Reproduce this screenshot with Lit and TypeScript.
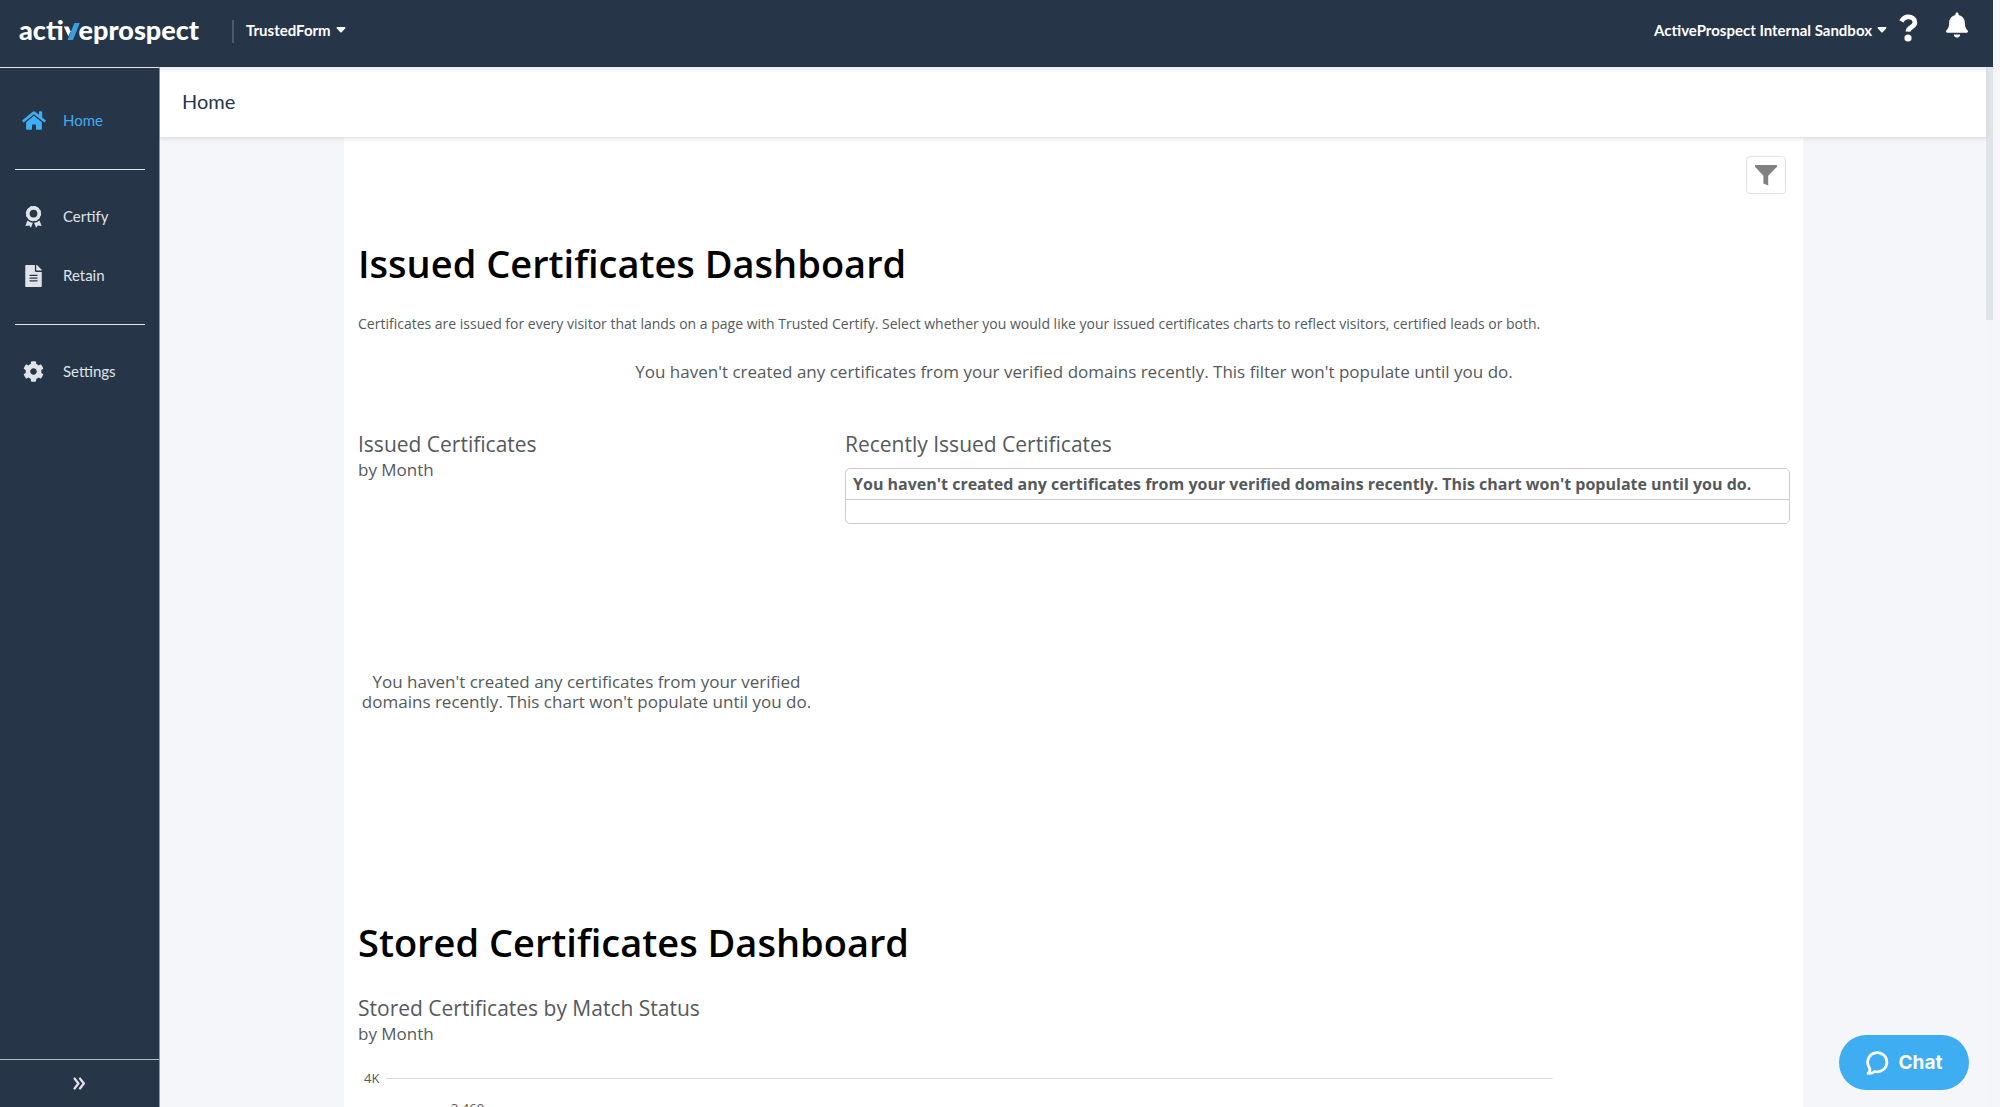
import { LitElement, html, css, svg } from "lit";
import { customElement, property } from "lit/decorators.js";

const ICONS: Record<string, { box: string; body: unknown }> = {
  home: {
    box: "0 0 576 512",
    body: svg`<path d="M280.37 148.26L96 300.11V464a16 16 0 0 0 16 16l112.06-.29a16 16 0 0 0 15.92-16V368a16 16 0 0 1 16-16h64a16 16 0 0 1 16 16v95.64a16 16 0 0 0 16 16.05L464 480a16 16 0 0 0 16-16V300L295.67 148.26a12.19 12.19 0 0 0-15.3 0zM571.6 251.47L488 182.56V44.05a12 12 0 0 0-12-12h-56a12 12 0 0 0-12 12v72.61L318.47 43a48 48 0 0 0-61 0L4.34 251.47a12 12 0 0 0-1.6 16.9l25.5 31A12 12 0 0 0 45.15 301l235.22-193.74a12.19 12.19 0 0 1 15.3 0L530.9 301a12 12 0 0 0 16.9-1.6l25.5-31a12 12 0 0 0-1.7-16.93z"/>`,
  },
  certify: {
    box: "0 0 17 22",
    body: svg`<circle cx="8.5" cy="7.6" r="5.7" fill="none" stroke="currentColor" stroke-width="3.6"/><circle cx="8.5" cy="7.6" r="7.2" fill="none" stroke="currentColor" stroke-width="1" stroke-dasharray="2.2 1.57"/><path d="M2.4 14.6C4 15.9 5.8 16.6 7.9 16.7L5.9 21.7L4.2 19.6L.4 20.1ZM14.6 14.6C13 15.9 11.2 16.6 9.1 16.7L11.1 21.7L12.8 19.6L16.6 20.1Z"/>`,
  },
  file: {
    box: "0 0 384 512",
    body: svg`<path d="M224 136V0H24C10.7 0 0 10.7 0 24v464c0 13.3 10.7 24 24 24h336c13.3 0 24-10.7 24-24V160H248c-13.2 0-24-10.8-24-24zm64 236c0 6.6-5.4 12-12 12H108c-6.6 0-12-5.4-12-12v-8c0-6.6 5.4-12 12-12h168c6.6 0 12 5.4 12 12v8zm0-64c0 6.6-5.4 12-12 12H108c-6.6 0-12-5.4-12-12v-8c0-6.6 5.4-12 12-12h168c6.6 0 12 5.4 12 12v8zm0-72v8c0 6.6-5.4 12-12 12H108c-6.6 0-12-5.4-12-12v-8c0-6.6 5.4-12 12-12h168c6.6 0 12 5.4 12 12zm96-114.1v6.1H256V0h6.1c6.4 0 12.5 2.5 17 7l97.9 98c4.5 4.5 7 10.6 7 16.9z"/>`,
  },
  cog: {
    box: "0 0 512 512",
    body: svg`<path d="M487.4 315.7l-42.6-24.6c4.3-23.2 4.3-47 0-70.2l42.6-24.6c4.9-2.8 7.1-8.6 5.5-14-11.1-35.6-30-67.8-54.7-94.6-3.8-4.1-10-5.1-14.8-2.3L380.8 110c-17.9-15.4-38.5-27.3-60.8-35.1V25.8c0-5.6-3.9-10.5-9.4-11.7-36.7-8.2-74.3-7.8-109.2 0-5.5 1.2-9.4 6.1-9.4 11.7V75c-22.2 7.9-42.8 19.8-60.8 35.1L88.7 85.5c-4.9-2.8-11-1.9-14.8 2.3-24.7 26.7-43.6 58.9-54.7 94.6-1.7 5.4.6 11.2 5.5 14L67.3 221c-4.3 23.2-4.3 47 0 70.2l-42.6 24.6c-4.9 2.8-7.1 8.6-5.5 14 11.1 35.6 30 67.8 54.7 94.6 3.8 4.1 10 5.1 14.8 2.3l42.6-24.6c17.9 15.4 38.5 27.3 60.8 35.1v49.2c0 5.6 3.9 10.5 9.4 11.7 36.7 8.2 74.3 7.8 109.2 0 5.5-1.2 9.4-6.1 9.4-11.7v-49.2c22.2-7.9 42.8-19.8 60.8-35.1l42.6 24.6c4.9 2.8 11 1.9 14.8-2.3 24.7-26.7 43.6-58.9 54.7-94.6 1.5-5.5-.7-11.3-5.6-14.1zM256 336c-44.1 0-80-35.9-80-80s35.9-80 80-80 80 35.9 80 80-35.9 80-80 80z"/>`,
  },
  bell: {
    box: "0 0 448 512",
    body: svg`<path d="M224 512c35.32 0 63.97-28.65 63.97-64H160.03c0 35.35 28.65 64 63.97 64zm215.39-149.71c-19.32-20.76-55.47-51.99-55.47-154.29 0-77.7-54.48-139.9-127.94-155.16V32c0-17.67-14.32-32-31.98-32s-31.98 14.33-31.98 32v20.84C118.56 68.1 64.08 130.3 64.08 208c0 102.3-36.15 133.53-55.47 154.29-6 6.45-8.66 14.16-8.61 21.71.11 16.4 12.98 32 32.1 32h383.8c19.12 0 32-15.6 32.1-32 .05-7.55-2.61-15.27-8.61-21.71z"/>`,
  },
  help: {
    box: "0 0 19 28",
    body: svg`<path d="M2.4 7.4C4 4.4 6.300 2.900 9.300 2.900C12.900 2.900 15.900 5 15.900 8.400C15.900 13.200 9.300 12.700 9 17.600" fill="none" stroke="currentColor" stroke-width="4.800"/><circle cx="9" cy="24" r="3.600"/>`,
  },
  caret: { box: "0 0 10 6", body: svg`<path d="M1.200 0H8.800Q10 .2 9.200 1.200L5.700 5.200Q5 5.800 4.300 5.200L.8 1.200Q0 .2 1.200 0Z"/>` },
  funnel: { box: "0 0 22 21", body: svg`<path d="M0 0H22V1.800L13.200 10.800V20.600L8.400 18.400V10.800L0 1.800Z"/>` },
  chevrons: {
    box: "0 0 12 12",
    body: svg`<path d="M1.500 1.500L5 6L1.500 10.500M6.500 1.500L10 6L6.500 10.500" fill="none" stroke="currentColor" stroke-width="2.200" stroke-linecap="round" stroke-linejoin="round"/>`,
  },
  chat: {
    box: "0 0 24 24",
    body: svg`<path d="M2 22.300C4.200 20.500 4.400 18.600 3.300 16.600A9.600 9.600 0 1 1 8.800 20.500C6.800 22.200 4.500 22.700 2 22.300Z" fill="none" stroke="currentColor" stroke-width="2.800" stroke-linejoin="round"/>`,
  },
};

@customElement("ui-icon")
class UiIcon extends LitElement {
  @property() name = "home";

  static styles = css`
    :host { display: inline-flex; flex: none; }
    svg { width: 100%; height: 100%; fill: currentColor; }
  `;

  render() {
    const icon = ICONS[this.name];
    return html`<svg viewBox=${icon.box} aria-hidden="true">${icon.body}</svg>`;
  }
}

@customElement("top-bar")
class TopBar extends LitElement {
  static styles = css`
    :host {
      display: flex; align-items: flex-start; justify-content: space-between;
      height: 67px; box-sizing: border-box; margin-right: 7px; padding: 0 25px 0 19px;
      background: #273548; color: #fff; font-family: Lato, "Liberation Sans", sans-serif;
    }
    .side { display: flex; align-items: center; height: 60px; }
    .logo { display: flex; align-items: baseline; color: #fff; text-decoration: none; font-size: 27px; font-weight: 900; line-height: 32px; }
    .vee { flex: none; width: 18px; height: 17px; margin: 0 -2px 0 -1px; }
    .rule { width: 2px; height: 23px; margin: 2px 12px 0 33px; background: #4c5a6b; }
    button { display: flex; align-items: center; gap: 5px; border: 0; padding: 0; background: none; color: inherit; font: inherit; cursor: pointer; }
    .menu { font-size: 15px; font-weight: 700; line-height: 24px; }
    .caret { width: 10px; height: 6px; }
    .round { align-self: flex-start; }
    .help { width: 19px; height: 28px; margin: 14px 28px 0 12px; }
    .bell { width: 22px; height: 26px; margin-top: 12px; }
  `;

  render() {
    return html`
      <div class="side">
        <a class="logo" href="#" aria-label="activeprospect">
          <span>acti</span>
          <svg class="vee" viewBox="0 0 18 17" aria-hidden="true">
            <path d="M.8 3.500H5.400L7.600 8.200L5.400 13.200Z" fill="#fff" />
            <path d="M11.400 0H16.800L10 17H4.600Z" fill="#3a9fe0" />
          </svg>
          <span>eprospect</span>
        </a>
        <span class="rule"></span>
        <button class="menu">TrustedForm <ui-icon class="caret" name="caret"></ui-icon></button>
      </div>
      <div class="side">
        <button class="menu">ActiveProspect Internal Sandbox <ui-icon class="caret" name="caret"></ui-icon></button>
        <button class="round" aria-label="Help"><ui-icon class="help" name="help"></ui-icon></button>
        <button class="round" aria-label="Notifications"><ui-icon class="bell" name="bell"></ui-icon></button>
      </div>
    `;
  }
}

@customElement("side-nav")
class SideNav extends LitElement {
  static styles = css`
    :host {
      display: flex; flex-direction: column; justify-content: space-between; box-sizing: border-box;
      border-top: 1px solid #dfe4e8; border-right: 1px solid #8d959f;
      background: #273548; color: #dfe4e8; font-family: Lato, "Liberation Sans", sans-serif;
    }
    nav { padding-top: 22px; }
    a { display: flex; align-items: center; height: 59px; padding-left: 16px; gap: 12px; color: inherit; text-decoration: none; font-size: 15px; line-height: 20px; }
    .active { color: #3fadf2; }
    .slot { display: flex; justify-content: center; width: 35px; padding-top: 2px; }
    .home { width: 24px; height: 21px; }
    .certify, .file { width: 17px; height: 22px; }
    .cog { width: 21px; height: 21px; }
    hr { height: 1px; margin: 20px 14px 16px 15px; border: 0; background: #dfe4e8; }
    button { display: flex; align-items: center; justify-content: center; height: 48px; width: 100%; border: 0; border-top: 1px solid #b5bbc3; padding: 0; background: none; color: inherit; }
    .chevrons { width: 13px; height: 13px; }
  `;

  private item(icon: string, label: string, active = false) {
    return html`<a href="#" class=${active ? "active" : ""}><span class="slot"><ui-icon class=${icon} name=${icon}></ui-icon></span>${label}</a>`;
  }

  render() {
    return html`
      <nav>
        ${this.item("home", "Home", true)}
        <hr />
        ${this.item("certify", "Certify")} ${this.item("file", "Retain")}
        <hr />
        ${this.item("cog", "Settings")}
      </nav>
      <button aria-label="Expand menu"><ui-icon class="chevrons" name="chevrons"></ui-icon></button>
    `;
  }
}

@customElement("app-root")
class AppRoot extends LitElement {
  static styles = css`
    :host { display: flex; flex-direction: column; height: 100vh; overflow: hidden; background: #f5f6fa; color: #55595c; font-family: "Open Sans", "Liberation Sans", sans-serif; }
    top-bar { flex: none; }
    .body { display: flex; flex: 1; min-height: 0; }
    side-nav { flex: none; width: 160px; }
    main { flex: 1; min-width: 0; display: flex; flex-direction: column; }
    .page-head { flex: none; box-sizing: border-box; height: 71px; padding: 20px 22px; background: linear-gradient(#e9ebed, #fff 6px); border-bottom: 1px solid #dfe4e8; box-shadow: 0 1px 4px #0000001a; color: #273548; position: relative; }
    .page-head h1 { margin: 0; font: 400 20px/28px Lato, "Liberation Sans", sans-serif; }
    .scroll { flex: 1; min-height: 0; overflow: hidden; padding: 0 183px 0 184px; }
    .card { box-sizing: border-box; min-height: 1400px; padding: 18px 13px 0 14px; background: #fff; }
    .tools { display: flex; justify-content: flex-end; padding-right: 4px; }
    .filter { display: flex; align-items: center; justify-content: center; width: 40px; height: 38px; padding: 0; border: 1px solid #e1e2e4; border-radius: 4px; background: #fff; color: #808080; }
    .funnel { width: 22px; height: 21px; }
    h2 { margin: 0; color: #000; font-size: 38px; font-weight: 600; line-height: 52px; }
    .issued { margin-top: 43px; }
    .desc { margin: 25px 0 0; font-size: 14px; line-height: 20px; }
    .notice { margin: 26px 0 0; font-size: 17px; line-height: 24px; text-align: center; }
    .charts { display: grid; grid-template-columns: 457px 1fr; gap: 30px; margin-top: 45px; }
    h3 { margin: 0; font-size: 21px; font-weight: 400; line-height: 30px; }
    .sub { margin: 0; font-size: 17px; line-height: 22px; }
    .empty { margin: 191px 0 0; font-size: 17px; line-height: 20px; text-align: center; }
    table { width: 100%; margin-top: 9px; border: 1px solid #cbcdd0; border-radius: 5px; border-spacing: 0; }
    th { height: 30px; padding: 0 7px; border-bottom: 1px solid #cbcdd0; font-size: 16px; font-weight: 700; line-height: 22px; text-align: left; }
    td { height: 23px; padding: 0; }
    .stored { margin-top: 204px; }
    .match { margin-top: 25px; }
    .axis { display: flex; align-items: center; gap: 7px; margin: 23px 237px 0 6px; font-size: 13px; line-height: 20px; }
    .grid { flex: 1; height: 1px; background: #dcdddf; }
    .value { margin: 10px 0 0 93px; font-size: 13px; line-height: 20px; }
    .track { flex: none; width: 7px; margin-right: 7px; background: #f3f5f7; }
    .thumb { height: 253px; background: #dfe4e8; }
    .chat { position: fixed; right: 31px; bottom: 17px; display: flex; align-items: center; justify-content: center; gap: 9px; width: 130px; height: 55px; border: 0; border-radius: 28px; padding: 0; background: #3fadf2; color: #fff; font: 700 19px/24px Inter, "Liberation Sans", sans-serif; }
    .bubble { width: 24px; height: 24px; }
  `;

  render() {
    return html`
      <top-bar></top-bar>
      <div class="body">
        <side-nav></side-nav>
        <main>
          <header class="page-head"><h1>Home</h1></header>
          <div class="scroll">
            <div class="card">
              <div class="tools"><button class="filter" aria-label="Filter"><ui-icon class="funnel" name="funnel"></ui-icon></button></div>
              <h2 class="issued">Issued Certificates Dashboard</h2>
              <p class="desc">Certificates are issued for every visitor that lands on a page with Trusted Certify. Select whether you would like your issued certificates charts to reflect visitors, certified leads or both.</p>
              <p class="notice">You haven't created any certificates from your verified domains recently. This filter won't populate until you do.</p>
              <div class="charts">
                <section>
                  <h3>Issued Certificates</h3>
                  <p class="sub">by Month</p>
                  <p class="empty">You haven't created any certificates from your verified domains recently. This chart won't populate until you do.</p>
                </section>
                <section>
                  <h3>Recently Issued Certificates</h3>
                  <table>
                    <thead><tr><th>You haven't created any certificates from your verified domains recently. This chart won't populate until you do.</th></tr></thead>
                    <tbody><tr><td></td></tr></tbody>
                  </table>
                </section>
              </div>
              <h2 class="stored">Stored Certificates Dashboard</h2>
              <h3 class="match">Stored Certificates by Match Status</h3>
              <p class="sub">by Month</p>
              <div class="axis"><span>4K</span><span class="grid"></span></div>
              <p class="value">3,460</p>
            </div>
          </div>
        </main>
        <div class="track"><div class="thumb"></div></div>
      </div>
      <button class="chat"><ui-icon class="bubble" name="chat"></ui-icon>Chat</button>
    `;
  }
}
